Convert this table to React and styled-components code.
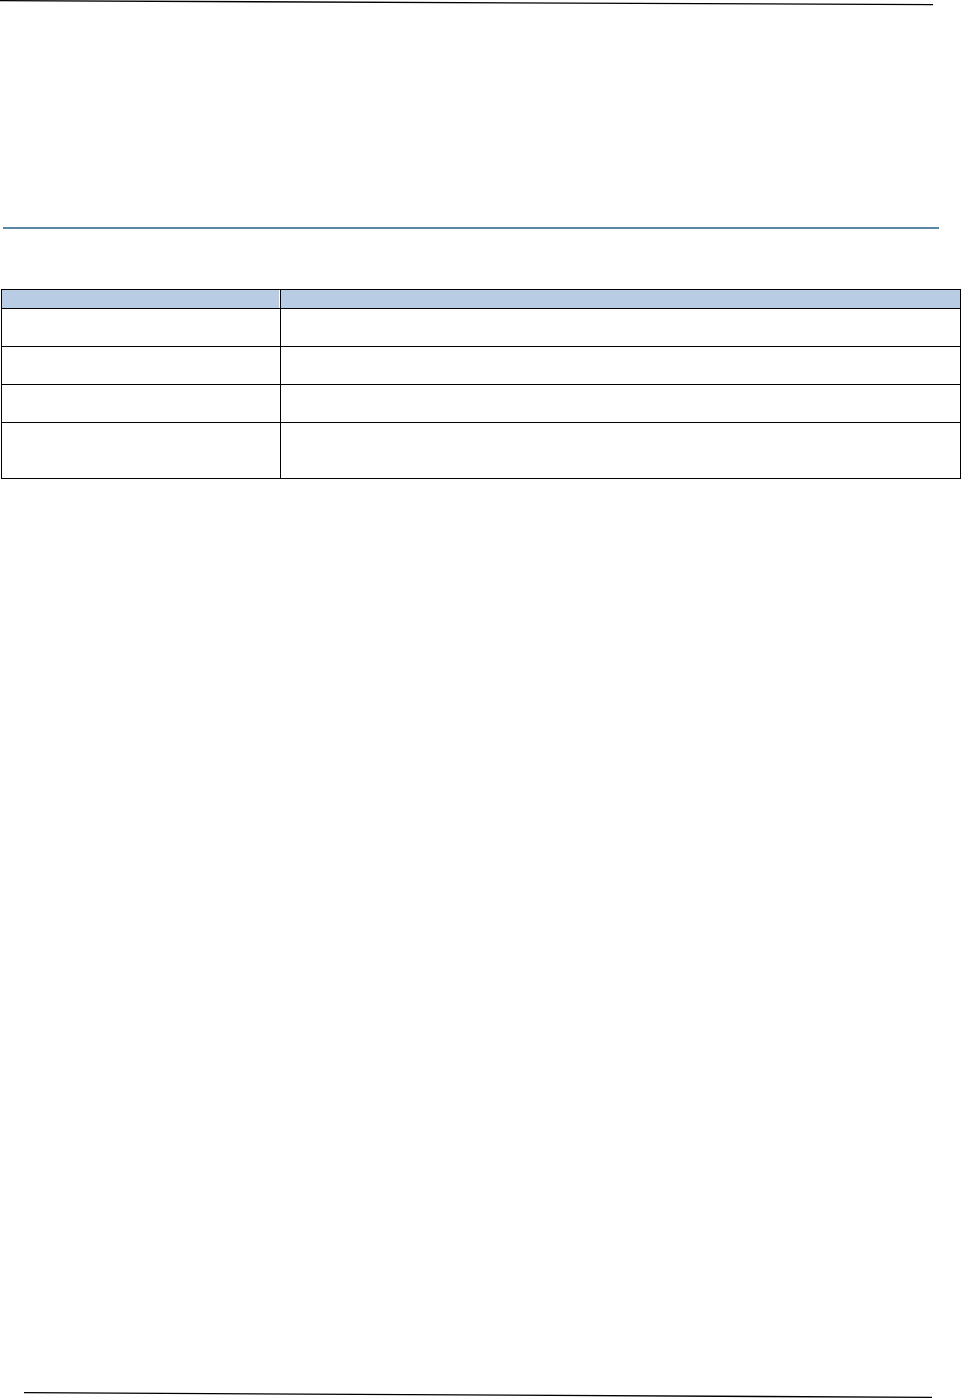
import React from "react";
import styled, { createGlobalStyle } from "styled-components";

const Global = createGlobalStyle`
  html, body { margin: 0; padding: 0; background: #fff; }
  body { font-family: "Liberation Sans", Arial, sans-serif; }
`;

const Page = styled.div`
  width: 961px;
  height: 1400px;
  display: flex;
  flex-direction: column;
  background: #fff;
  overflow: hidden;
`;

const EdgeRule = styled.svg`
  display: block;
  width: 961px;
  height: ${(p) => p.$h}px;
  flex: none;
  margin-top: ${(p) => (p.$bottom ? "auto" : "0")};
`;

const HeadingRule = styled.div`
  margin: 221px 0 0 3px;
  width: 936px;
  height: 2px;
  background: #5b87a7;
  flex: none;
`;

const Table = styled.div`
  margin: 60px 0 0 1px;
  width: 960px;
  box-sizing: border-box;
  display: grid;
  grid-template-columns: 279px 680px;
  grid-template-rows: 19px 38px 38px 38px 56px;
  border-top: 1px solid #000;
  border-left: 1px solid #000;
  flex: none;
`;

const Cell = styled.div`
  box-sizing: border-box;
  border-right: 1px solid #000;
  border-bottom: 1px solid #000;
  background: ${(p) => (p.$head ? "#b8cce4" : "#fff")};
  box-shadow: ${(p) => (p.$head && p.$first ? "inset -1px 0 0 #fff" : "none")};
  font-size: 13px;
  color: #000;
`;

const rows = [true, false, false, false, false];

export default function App() {
  return (
    <>
      <Global />
      <Page>
        <EdgeRule $h={6} viewBox="0 0 961 6">
          <line x1="0" y1="0.7" x2="933" y2="4.6" stroke="#000" strokeWidth="1.3" />
        </EdgeRule>
        <HeadingRule />
        <Table>
          {rows.map((head, i) => (
            <React.Fragment key={i}>
              <Cell $head={head} $first />
              <Cell $head={head} />
            </React.Fragment>
          ))}
        </Table>
        <EdgeRule $h={9} $bottom viewBox="0 0 961 9">
          <line x1="24" y1="1.6" x2="932" y2="6.4" stroke="#000" strokeWidth="1.3" />
        </EdgeRule>
      </Page>
    </>
  );
}
